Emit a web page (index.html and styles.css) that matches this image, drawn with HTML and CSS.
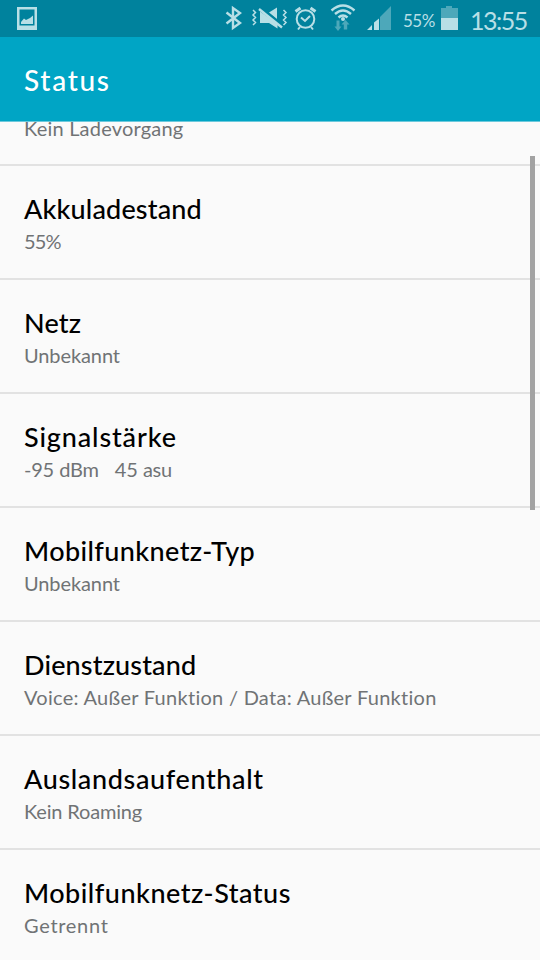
FILE: index.html
```html
<!DOCTYPE html>
<html lang="de">
<head>
<meta charset="utf-8">
<title>Status</title>
<link rel="stylesheet" href="styles.css">
</head>
<body>
<div class="screen">
  <header class="statusbar">
    <svg class="icons" width="540" height="38" viewBox="0 0 540 38" aria-hidden="true">
      <g class="ink">
        <path fill-rule="evenodd" d="M17 7h20v23H17zM19.500 9.500v16h15v-16z"/>
        <path d="M21 24v-2l3-3.500 2 1.500 4-2 3-2.500V24z"/>
        <path d="M269 12.500l8-5V19zM260 11.500L277.500 24v4.500L269 23h-9z"/>
        <path d="M367 30l5-5v5zM374 30V22.500l5-4V30z"/>
        <path d="M441 18h17v12h-17z"/>
        <circle cx="343" cy="19" r="2"/>
      </g>
      <g class="dim">
        <path d="M380 30V17L391 6v24z"/>
        <path d="M441 8h5V6h6v2h6v10h-17z"/>
        <path d="M338 31l-3.500-4.500h2v-6h3v6h2zM345.500 20l4 4.500h-2.300v5h-3.400v-5h-2.300z"/>
      </g>
      <g class="line">
        <path class="bold" d="M226.500 12.500L240 23l-7 5V8l7 5-13.500 10.500"/>
        <path class="gap" d="M260.500 7.500l22 17.500"/>
        <path class="bold" d="M259 9l23 18.500"/>
        <path class="thin" d="M253 10l2.500 2.500L253 15l2.500 2.500L253 20l2.500 2.500L253 25M283.500 10l2.500 2.500-2.500 2.500 2.500 2.500-2.500 2.500 2.500 2.500-2.500 2.500"/>
        <circle cx="305.500" cy="19" r="8.800"/>
        <path d="M301 17.500l4 3.500 5-5M300 27l-2 2.500M311 27l2 2.500"/>
        <path class="bell" d="M295.500 11.500l5-3.500M315.500 11.500L310.500 8"/>
        <path class="bold" d="M331.500 10.500q11.500-10 23 0M335 14q8-7 16 0M338.500 17.500q4.500-4 9 0"/>
      </g>
    </svg>
    <span class="battery">55%</span>
    <span class="clock">13:55</span>
  </header>
  <div class="appbar"><h1>Status</h1></div>
  <main class="list">
    <section class="row first charging"><p>Kein Ladevorgang</p></section>
    <section class="row level"><h2>Akkuladestand</h2><p>55%</p></section>
    <section class="row network"><h2>Netz</h2><p>Unbekannt</p></section>
    <section class="row signal"><h2>Signalstärke</h2><p>-95 dBm&nbsp;&nbsp; 45 asu</p></section>
    <section class="row type"><h2>Mobilfunknetz-Typ</h2><p>Unbekannt</p></section>
    <section class="row service"><h2>Dienstzustand</h2><p>Voice: Außer Funktion / Data: Außer Funktion</p></section>
    <section class="row roaming"><h2>Auslandsaufenthalt</h2><p>Kein Roaming</p></section>
    <section class="row state"><h2>Mobilfunknetz-Status</h2><p>Getrennt</p></section>
  </main>
  <div class="scrollbar"></div>
</div>
</body>
</html>
```
FILE: styles.css
```css
* { box-sizing: border-box; }
body { margin: 0; font-family: Lato, "Open Sans", sans-serif; }
.screen { position: relative; width: 540px; height: 960px; overflow: hidden; background: #fafafa; display: flex; flex-direction: column; }
.statusbar { position: relative; flex: none; height: 37px; background: #00829d; display: flex; justify-content: flex-end; align-items: center; color: #b8dfe6; padding: 3px 12px 0 0; white-space: nowrap; }
.icons { position: absolute; left: 0; top: 0; }
.ink { fill: #b8dfe6; }
.dim { fill: #4da8ba; }
.line { fill: none; stroke: #b8dfe6; stroke-width: 2; }
.thin { stroke-width: 1.5; }
.bold { stroke-width: 2.4; }
.bell { stroke-width: 3; }
.gap { stroke: #00829d; }
.battery { width: 67px; font-size: 17px; letter-spacing: -0.5px; }
.clock { width: 58px; font-size: 25px; line-height: 32px; letter-spacing: -1.5px; }
.appbar { flex: none; height: 85px; padding: 2px 0 0 24px; background: #00a5c5; border-bottom: 1px solid #6cc9dc; display: flex; align-items: center; }
h1, h2, p { margin: 0; font-weight: 500; white-space: nowrap; }
h1 { font-size: 28px; letter-spacing: 1.7px; color: #fff; }
.list { flex: 1; overflow: hidden; }
.row { height: 114px; padding: 26px 24px 0; border-bottom: 2px solid #e2e2e2; }
.row.first { display: flow-root; height: 44px; padding-top: 0; }
.first p { margin-top: -9px; }
h2 { font-size: 27px; line-height: 34px; letter-spacing: 0.15px; color: #000; }
p { font-size: 20px; line-height: 30px; font-weight: 400; letter-spacing: -0.1px; color: #707375; }
.charging p { letter-spacing: 0.2px; }
.level p { letter-spacing: -0.9px; }
.signal h2 { letter-spacing: 0.85px; }
.signal p { letter-spacing: -0.25px; word-spacing: 0.5px; }
.type h2 { letter-spacing: 0.4px; }
.service p { letter-spacing: 0.28px; }
.roaming h2 { letter-spacing: 0.63px; }
.roaming p { letter-spacing: -0.17px; }
.state h2 { letter-spacing: 0.5px; }
.state p { letter-spacing: 0.7px; }
.scrollbar { position: absolute; left: 530px; top: 156px; width: 5px; height: 354px; background: #a2a2a2; }
```
